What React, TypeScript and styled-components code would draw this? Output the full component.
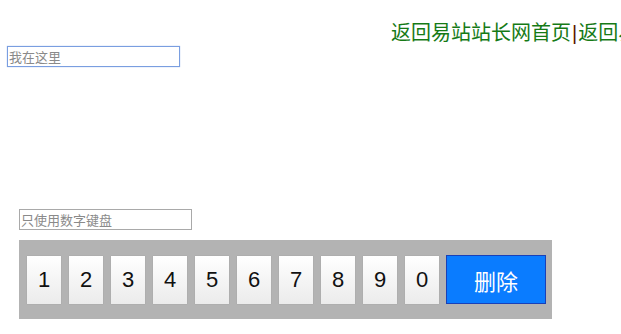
import { createGlobalStyle } from "styled-components";
import styled from "styled-components";

const GlobalStyle = createGlobalStyle`
  html, body {
    margin: 0;
    padding: 0;
    background: #ffffff;
  }
  body {
    font-family: "Liberation Sans", "Noto Sans CJK SC", sans-serif;
  }
`;

const Page = styled.div`
  width: 621px;
  height: 334px;
  overflow: hidden;
  display: flex;
  flex-direction: column;
`;

const HomeLinks = styled.div`
  padding: 19px 0 0 391px;
  height: 27px;
  white-space: nowrap;
  overflow: hidden;
  font-family: "Noto Sans CJK SC", sans-serif;
  font-size: 20px;
  line-height: 26px;
  color: #167a16;
`;

const Divider = styled.span`
  color: #5a1600;
  margin: 0 1px;
  font-family: "Liberation Sans", sans-serif;
  font-weight: 300;
`;

const TextField = styled.input<{ $focused?: boolean }>`
  box-sizing: border-box;
  display: block;
  height: 21px;
  padding: 0 1px;
  font-family: "Noto Sans CJK SC", sans-serif;
  font-size: 13px;
  color: #333;
  background: #fff;
  border: 1px solid ${(p) => (p.$focused ? "#7a9ee0" : "#a9a9a9")};
  box-shadow: ${(p) => (p.$focused ? "0 0 1px #9bb8ea" : "none")};
  outline: none;
  &::placeholder {
    color: #8a8a8a;
  }
`;

const SearchField = styled(TextField)`
  margin: 0 0 0 7px;
  width: 173px;
`;

const DigitField = styled(TextField)`
  margin: 142px 0 0 19px;
  width: 173px;
  height: 21px;
`;

const Keypad = styled.div`
  box-sizing: border-box;
  margin: 10px 0 0 19px;
  width: 533px;
  height: 79px;
  padding: 15px 6px 15px 8px;
  background: #b3b3b3;
  display: flex;
  align-items: flex-start;
  gap: 8px;
`;

const Key = styled.button`
  box-sizing: border-box;
  width: 34px;
  height: 48px;
  margin-top: 1px;
  padding: 0;
  border: none;
  background: linear-gradient(#ffffff, #ebebeb);
  box-shadow: 0 0 1px rgba(0, 0, 0, 0.15);
  font-family: "Liberation Sans", sans-serif;
  font-size: 22px;
  color: #111;
  display: flex;
  align-items: center;
  justify-content: center;
`;

const DeleteKey = styled.button`
  box-sizing: border-box;
  width: 100px;
  height: 49px;
  margin-left: -1px;
  padding: 0;
  border: 1px solid #1840b8;
  background: #0a7cff;
  color: #ffffff;
  font-family: "Noto Sans CJK SC", sans-serif;
  font-size: 22px;
  display: flex;
  align-items: center;
  justify-content: center;
`;

const digits = ["1", "2", "3", "4", "5", "6", "7", "8", "9", "0"];

export default function App() {
  return (
    <>
      <GlobalStyle />
      <Page>
        <HomeLinks>
          返回易站站长网首页<Divider>|</Divider>返回易站首页
        </HomeLinks>
        <SearchField $focused placeholder="我在这里" />
        <DigitField placeholder="只使用数字键盘" />
        <Keypad>
          {digits.map((d) => (
            <Key key={d}>{d}</Key>
          ))}
          <DeleteKey>删除</DeleteKey>
        </Keypad>
      </Page>
    </>
  );
}
